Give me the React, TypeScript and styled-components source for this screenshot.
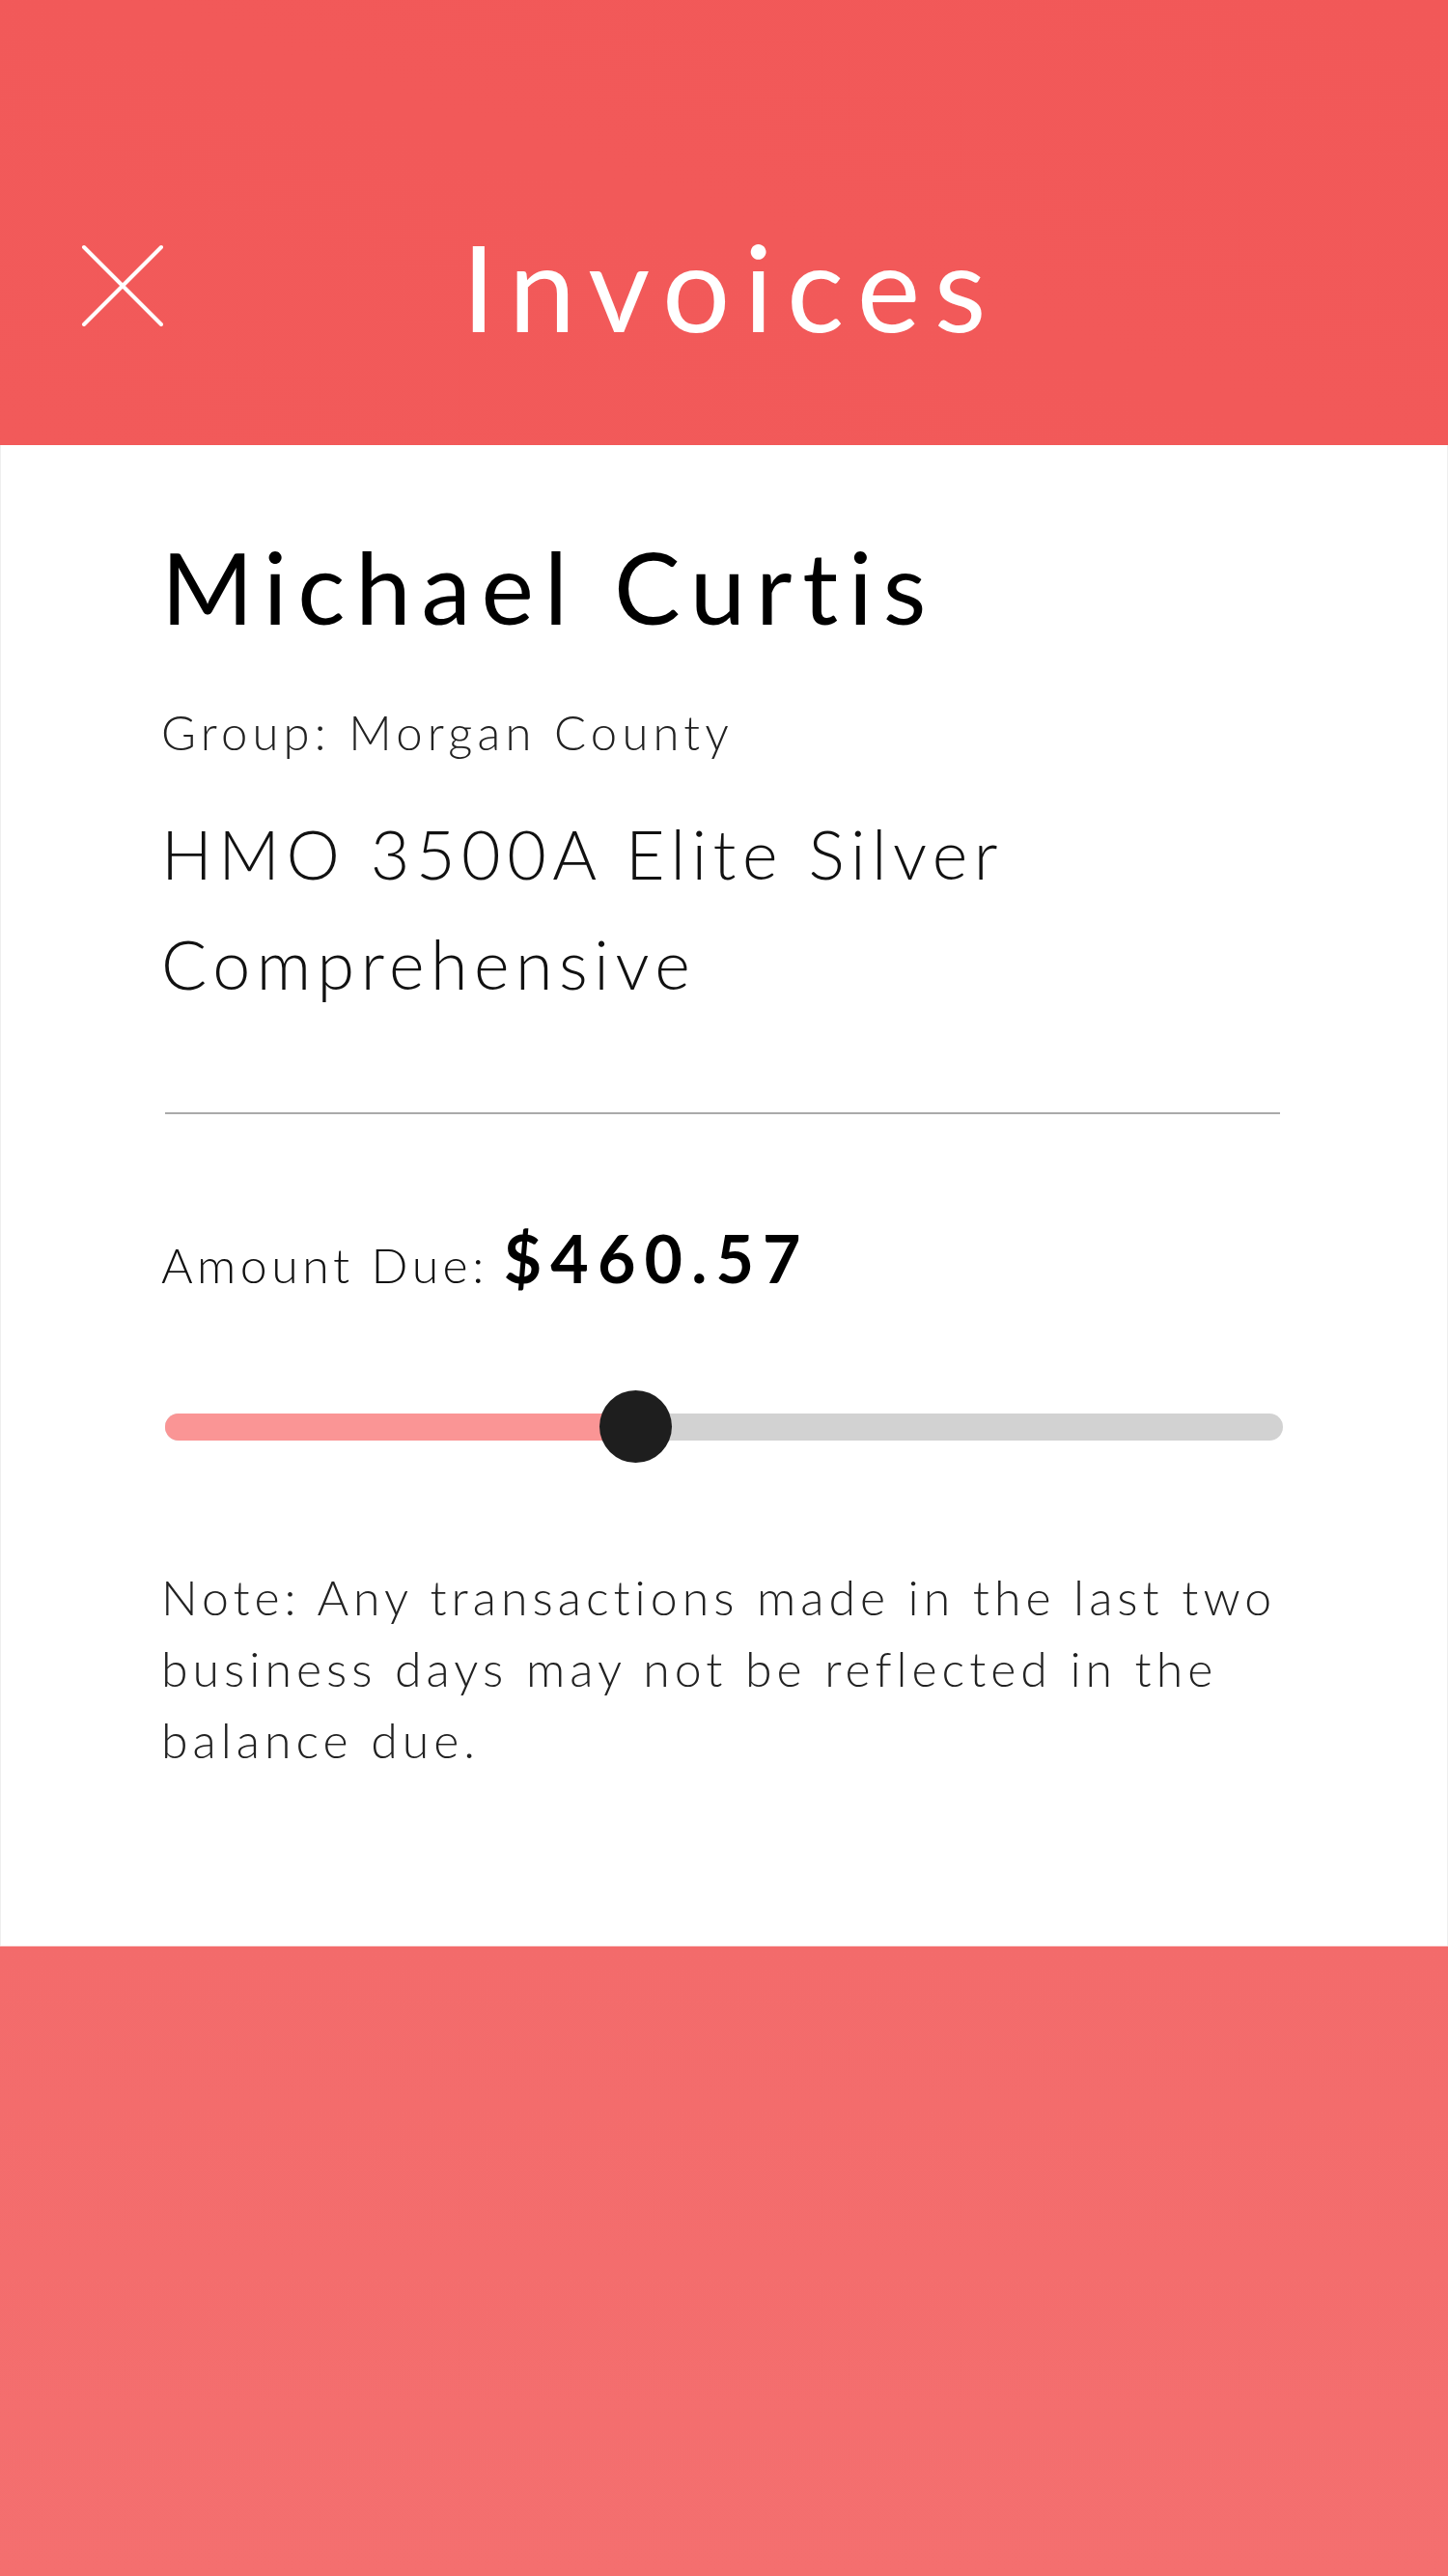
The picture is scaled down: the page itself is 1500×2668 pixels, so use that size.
import React from "react";
import styled, { createGlobalStyle } from "styled-components";

const Global = createGlobalStyle`
  html, body { margin: 0; padding: 0; }
  body { font-family: Lato, "Noto Sans", sans-serif; background: #f46e6e; }
  #root { min-height: 2668px; display: flex; flex-direction: column; }
`;

const Page = styled.div`
  display: flex;
  flex-direction: column;
  min-height: 2668px;
  width: 1500px;
`;

const Header = styled.header`
  height: 461px;
  box-sizing: border-box;
  padding-top: 130px;
  background: linear-gradient(200deg, #f25858 0%, #f25a5a 100%);
  display: grid;
  grid-template-columns: 1fr auto 1fr;
  align-items: center;
`;

const CloseButton = styled.button`
  justify-self: start;
  margin-left: 84px;
  width: 86px;
  height: 86px;
  padding: 0;
  border: 0;
  background: transparent;
  display: flex;
  align-items: center;
  justify-content: center;
  cursor: pointer;
`;

const Title = styled.h1`
  margin: 0;
  font-family: Lato, sans-serif;
  font-weight: 400;
  font-size: 124px;
  line-height: 1;
  letter-spacing: 0.117em;
  margin-right: -0.117em;
  color: #ffffff;
`;

const Content = styled.main`
  background: #ffffff;
  box-sizing: border-box;
  padding: 95px 170px 176px 166px;
  display: flex;
  flex-direction: column;
  border-left: 1px solid #efefef;
  border-right: 1px solid #efefef;
`;

const Name = styled.h2`
  margin: 0;
  font-weight: 400;
  font-size: 103px;
  line-height: 1;
  letter-spacing: 0.105em;
  color: #000;
`;

const Group = styled.div`
  margin-top: 75px;
  font-weight: 300;
  font-size: 49px;
  line-height: 1;
  letter-spacing: 0.106em;
  color: #222;
`;

const Plan = styled.div`
  margin-top: 44px;
  font-weight: 300;
  font-size: 70px;
  line-height: 114px;
  letter-spacing: 0.093em;
  color: #111;
  max-width: 990px;
`;

const Divider = styled.hr`
  margin: 97px 3px 0 4px;
  border: 0;
  height: 2px;
  background: #aaaaaa;
`;

const AmountRow = styled.div`
  margin-top: 115px;
  display: flex;
  align-items: baseline;
  gap: 16px;
  line-height: 1;
`;

const AmountLabel = styled.span`
  font-weight: 300;
  font-size: 50px;
  letter-spacing: 0.09em;
  color: #111;
`;

const AmountValue = styled.span`
  font-weight: 700;
  font-size: 68px;
  letter-spacing: 0.135em;
  color: #000;
`;

const Slider = styled.div`
  margin-top: 103px;
  margin-left: 4px;
  position: relative;
  height: 75px;
  display: flex;
  align-items: center;
`;

const Track = styled.div`
  flex: 1;
  height: 28px;
  border-radius: 14px;
  background: #d2d2d2;
  overflow: hidden;
  display: flex;
`;

const Fill = styled.div`
  height: 100%;
  background: #fa9595;
`;

const Thumb = styled.div`
  position: absolute;
  top: 0;
  width: 75px;
  height: 75px;
  margin-left: -37px;
  border-radius: 50%;
  background: #1e1e1e;
`;

const Note = styled.p`
  margin: 102px 0 0 0;
  font-weight: 300;
  font-size: 50px;
  line-height: 74px;
  letter-spacing: 0.1em;
  color: #222;
`;

const Footer = styled.footer`
  flex: 1;
  background: linear-gradient(180deg, #f36b6b 0%, #f46f6f 100%);
  border-top: 1px solid #fbdede;
`;

const CloseIcon = () => (
  <svg width="86" height="86" viewBox="0 0 86 86" fill="none">
    <path d="M3 3 L83 83 M83 3 L3 83" stroke="#ffffff" strokeWidth="4" strokeLinecap="round" />
  </svg>
);

export default function App() {
  const pct = (658 - 170) / 1160;
  return (
    <Page>
      <Global />
      <Header>
        <CloseButton aria-label="Close">
          <CloseIcon />
        </CloseButton>
        <Title>Invoices</Title>
        <div />
      </Header>
      <Content>
        <Name>Michael Curtis</Name>
        <Group>Group: Morgan County</Group>
        <Plan>HMO 3500A Elite Silver Comprehensive</Plan>
        <Divider />
        <AmountRow>
          <AmountLabel>Amount Due:</AmountLabel>
          <AmountValue>$460.57</AmountValue>
        </AmountRow>
        <Slider>
          <Track>
            <Fill style={{ width: `${pct * 100}%` }} />
          </Track>
          <Thumb style={{ left: `${pct * 100}%` }} />
        </Slider>
        <Note>
          Note: Any transactions made in the last two business days may not be reflected in the balance due.
        </Note>
      </Content>
      <Footer />
    </Page>
  );
}
